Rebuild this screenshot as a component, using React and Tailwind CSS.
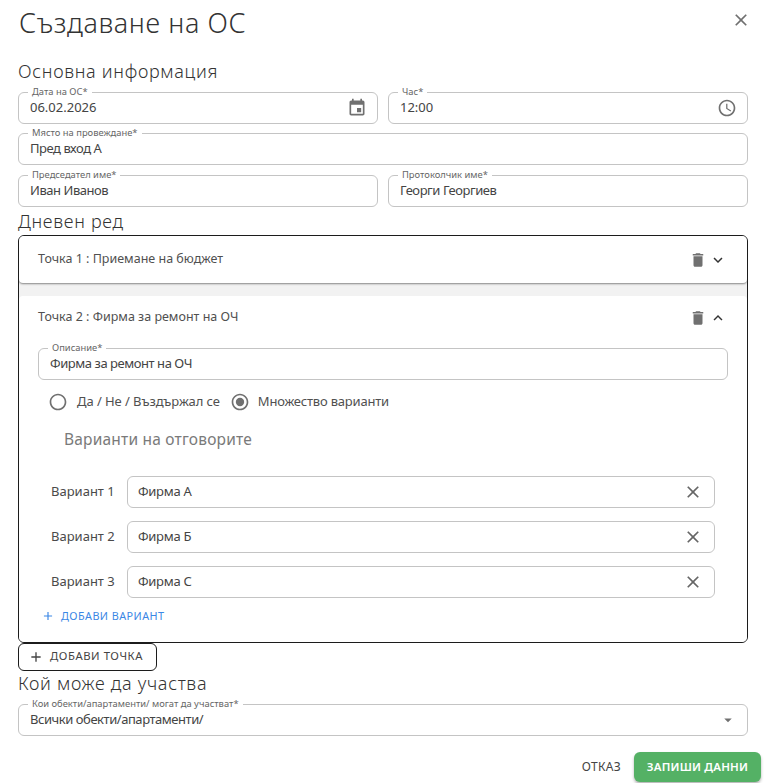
const P = {
  event: "M17 12h-5v5h5v-5zM16 1v2H8V1H6v2H5c-1.11 0-1.99.9-1.99 2L3 19c0 1.1.89 2 2 2h14c1.1 0 2-.9 2-2V5c0-1.1-.9-2-2-2h-1V1h-2zm3 18H5V8h14v11z",
  clock: "M11.99 2C6.47 2 2 6.48 2 12s4.47 10 9.99 10C17.52 22 22 17.52 22 12S17.52 2 11.99 2zM12 20c-4.42 0-8-3.58-8-8s3.58-8 8-8 8 3.58 8 8-3.58 8-8 8zM12.5 7H11v6l5.25 3.15.75-1.23-4.5-2.67z",
  close: "M19 6.41 17.59 5 12 10.59 6.41 5 5 6.41 10.59 12 5 17.59 6.41 19 12 13.41 17.59 19 19 17.59 13.41 12z",
  del: "M6 19c0 1.1.9 2 2 2h8c1.1 0 2-.9 2-2V7H6v12zM19 4h-3.5l-1-1h-5l-1 1H5v2h14V4z",
  more: "M16.59 8.59 12 13.17 7.41 8.59 6 10l6 6 6-6z",
  less: "m12 8-6 6 1.41 1.41L12 10.83l4.59 4.58L18 14z",
  add: "M19 13h-6v6h-2v-6H5v-2h6V5h2v6h6v2z",
  drop: "m7 10 5 5 5-5z",
  radio: "M12 2C6.48 2 2 6.48 2 12s4.48 10 10 10 10-4.48 10-10S17.52 2 12 2zm0 18c-4.42 0-8-3.58-8-8s3.58-8 8-8 8 3.58 8 8-3.58 8-8 8z",
};

function Icon({ d, className, children }) {
  return (
    <svg viewBox="0 0 24 24" fill="currentColor" className={className}>
      <path d={d} />
      {children}
    </svg>
  );
}

function Field({ label, value, icon, digits = false, className = "" }) {
  return (
    <div className={`relative h-8 flex items-center justify-between rounded-[6px] border border-[#c4c4c4] pl-[11px] pr-[10px] ${className}`}>
      <span className="absolute left-[9px] -top-[7px] bg-white px-[4px] text-[9.4px] leading-[12px] text-[#666666] whitespace-nowrap">{label}</span>
      <span className={`text-[13px] leading-[18px] pb-[2px] text-[#444444] whitespace-nowrap ${digits ? "" : "tracking-[-0.45px]"}`}>{value}</span>
      {icon}
    </div>
  );
}

function Variant({ n, value }) {
  return (
    <div className="flex items-center h-8">
      <span className="w-[89px] pl-[13px] text-[13px] text-[#4a4a4a] whitespace-nowrap">Вариант {n}</span>
      <div className="flex-1 h-8 flex items-center justify-between rounded-[6px] border border-[#c4c4c4] pl-[10px] pr-[13px]">
        <span className="text-[13px] text-[#444444] tracking-[-0.3px]">{value}</span>
        <Icon d={P.close} className="w-[20px] h-[20px] text-[#666666] -mr-[2px]" />
      </div>
    </div>
  );
}

function ItemHead({ title, arrow, className = "" }) {
  return (
    <div className={`flex items-center justify-between pl-[19px] pr-[20px] ${className}`}>
      <span className="text-[12.5px] text-[#505050] whitespace-nowrap">{title}</span>
      <div className="flex items-center gap-[2px] pt-[2px]">
        <Icon d={P.del} className="w-[18px] h-[18px] text-[#707070]" />
        <Icon d={arrow} className="w-[18px] h-[18px] text-[#333333]" />
      </div>
    </div>
  );
}

export default function App() {
  return (
    <div className="w-[765px] h-[783px] overflow-hidden bg-white flex flex-col font-['Noto_Sans',sans-serif]">
      <header className="h-[48px] shrink-0 flex items-center justify-between pl-[19px] pr-[14px]">
        <h1 className="text-[27px] font-light text-[#333333] tracking-[0.62px] -mt-[2px]">Създаване на ОС</h1>
        <Icon d={P.close} className="w-[20px] h-[20px] text-[#707070] -mt-[9px]" />
      </header>

      <main className="pl-[18px] pr-[17px] flex flex-col">
        <h2 className="h-[44px] pt-[11px] text-[18px] font-light leading-[24px] text-[#333333] tracking-[0.7px]">Основна информация</h2>
        <div className="grid grid-cols-2 gap-x-[10px] gap-y-[9.3px]">
          <Field digits label="Дата на ОС*" value="06.02.2026" icon={<Icon d={P.event} className="w-[20px] h-[20px] text-[#707070]" />} />
          <Field digits label="Час*" value="12:00" icon={<Icon d={P.clock} className="w-[20px] h-[20px] text-[#707070]" />} />
          <Field label="Място на провеждане*" value="Пред вход А" className="col-span-2" />
          <Field label="Председател име*" value="Иван Иванов" />
          <Field label="Протоколчик име*" value="Георги Георгиев" />
        </div>

        <h2 className="h-[28px] pt-[2px] text-[18px] font-light leading-[24px] text-[#333333] tracking-[0.7px]">Дневен ред</h2>

        <section className="h-[408px] shrink-0 rounded-[6px] border border-[#1c1c1c] bg-[#f2f2f2] overflow-hidden flex flex-col">
          <ItemHead
            title="Точка 1 : Приемане на бюджет"
            arrow={P.more}
            className="h-[47px] shrink-0 bg-white rounded-b-[4px] shadow-[0_1px_2px_rgba(0,0,0,0.45)]"
          />
          <div className="flex-1 mt-[13px] bg-white rounded-t-[4px] flex flex-col">
            <ItemHead title="Точка 2 : Фирма за ремонт на ОЧ" arrow={P.less} className="h-[43px] shrink-0" />
            <div className="px-[19px] mt-[9px]">
              <Field label="Описание*" value="Фирма за ремонт на ОЧ" />
            </div>
            <div className="flex items-center h-[22px] mt-[11px] pl-[29px] text-[13px] text-[#505050] tracking-[-0.07px]">
              <Icon d={P.radio} className="w-[20px] h-[20px] text-[#707070]" />
              <span className="ml-[9px] whitespace-nowrap">Да / Не / Въздържал се</span>
              <Icon d={P.radio} className="w-[20px] h-[20px] text-[#707070] ml-[10px]">
                <circle cx="12" cy="12" r="5" />
              </Icon>
              <span className="ml-[8px] whitespace-nowrap tracking-[-0.2px]">Множество варианти</span>
            </div>
            <div className="pl-[45px] mt-[16px] text-[15.5px] leading-[22px] text-[#7a7a7a] tracking-[0.2px] -translate-y-[1px]">Варианти на отговорите</div>
            <div className="flex flex-col gap-[13px] pl-[19px] pr-[32px] mt-[25px]">
              <Variant n={1} value="Фирма А" />
              <Variant n={2} value="Фирма Б" />
              <Variant n={3} value="Фирма С" />
            </div>
            <div className="flex items-center gap-[6px] pl-[22px] mt-[8px] h-[20px] text-[#3b87e5]">
              <Icon d={P.add} className="w-[14px] h-[14px]" />
              <span className="text-[10.8px] tracking-[0.45px] uppercase whitespace-nowrap">Добави вариант</span>
            </div>
          </div>
        </section>

        <div className="w-[139px] h-[28px] shrink-0 flex items-center gap-[6px] pl-[9px] rounded-[6px] border border-[#1c1c1c] text-[#444444]">
          <Icon d={P.add} className="w-[16px] h-[16px]" />
          <span className="text-[11.3px] tracking-[0.55px] uppercase whitespace-nowrap">Добави точка</span>
        </div>

        <h2 className="h-[33px] text-[18px] font-light leading-[24px] text-[#333333] tracking-[0.7px]">Кой може да участва</h2>
        <Field
          label="Кои обекти/апартаменти/ могат да участват*"
          value="Всички обекти/апартаменти/"
          icon={<Icon d={P.drop} className="w-[18px] h-[18px] text-[#707070]" />}
        />
      </main>

      <footer className="flex items-center justify-end gap-[13px] pr-[4px] mt-[16px]">
        <span className="text-[12px] text-[#444444] tracking-[0.3px]">ОТКАЗ</span>
        <div className="w-[127px] h-[30px] rounded-[6px] bg-[#54b165] flex items-center justify-center shadow-[0_2px_3px_rgba(0,0,0,0.3)] text-[11.5px] font-semibold text-white tracking-[0.2px]">ЗАПИШИ ДАННИ</div>
      </footer>
    </div>
  );
}
